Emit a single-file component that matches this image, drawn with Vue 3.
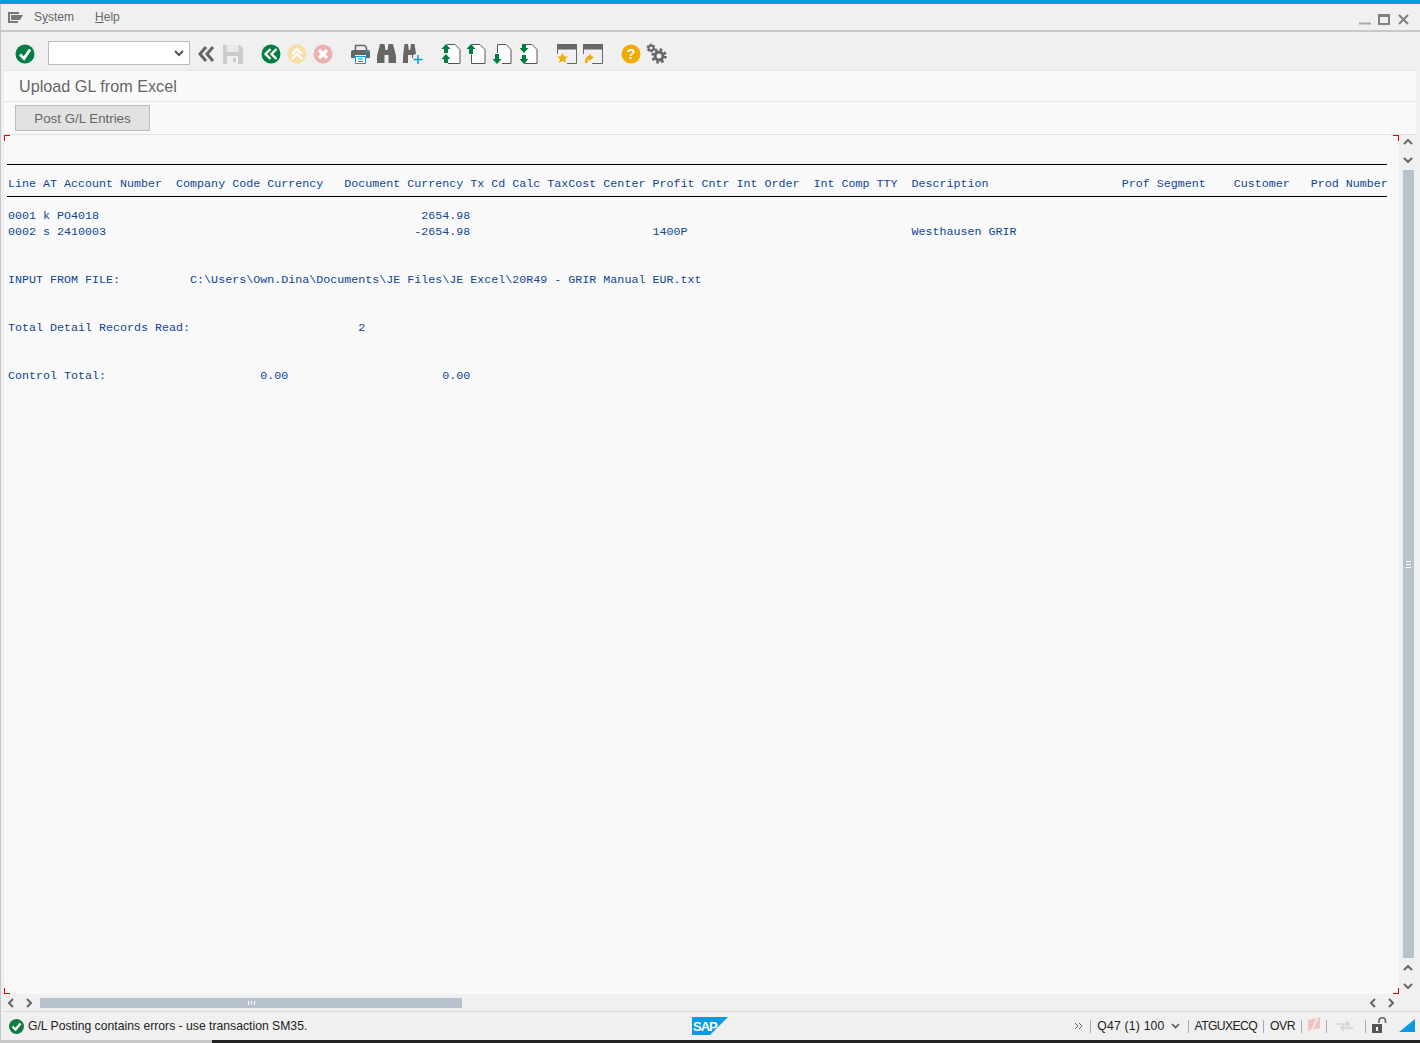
<template>
  <div class="page">
    <div class="blue-bar"></div>
    <div class="window">
      <div class="menubar">
        <svg class="menu-icon" width="15" height="11" viewBox="0 0 15 11">
          <path d="M0 0h11v2H2v7h8v2H0z" fill="#777" />
          <path d="M3 3h12l-3 5H3z" fill="#777" />
        </svg>
        <span class="menu-item">S<u>y</u>stem</span>
        <span class="menu-item"><u>H</u>elp</span>
        <div class="win-controls">
          <svg width="12" height="11" viewBox="0 0 12 11"><rect y="8.500" width="12" height="2" fill="#aaa" /></svg>
          <svg class="win-max" width="12" height="11" viewBox="0 0 12 11"><path d="M1 1h10v9H1z" fill="none" stroke="#808080" stroke-width="2" /><rect width="12" height="3" fill="#808080" /></svg>
          <svg width="11" height="11" viewBox="0 0 11 11"><path d="M1 1l9 9M10 1l-9 9" stroke="#808080" stroke-width="2" /></svg>
        </div>
      </div>

      <div class="toolbar">
        <svg class="ic" viewBox="0 0 20 20">
          <circle cx="10" cy="10" r="9.500" fill="#007d40" />
          <path d="M5 10.500l4 4 6-9" fill="none" stroke="#fff" stroke-width="3" />
        </svg>
        <div class="combo">
          <svg width="10" height="7" viewBox="0 0 10 7"><path d="M1 1l4 4 4-4" fill="none" stroke="#555" stroke-width="2" /></svg>
        </div>
        <div class="tb-group first">
          <svg class="ic" viewBox="0 0 20 20">
            <path d="M9 3l-6 7 6 7M16 3l-6 7 6 7" fill="none" stroke="#666" stroke-width="3" />
          </svg>
          <svg class="ic" viewBox="0 0 20 20">
            <path d="M0 1h17l3 3v16H0z" fill="#ccc" />
            <rect x="3.500" y="1" width="12" height="7" fill="#e9e9e9" />
            <rect x="4" y="12" width="11" height="8" fill="#f0f0f0" />
            <rect x="10" y="14" width="3" height="4" fill="#ccc" />
          </svg>
        </div>
        <div class="tb-group">
          <svg class="ic" viewBox="0 0 20 20">
            <circle cx="10" cy="10" r="9.500" fill="#007d40" />
            <path d="M9.500 5l-5 5 5 5M15.500 5l-5 5 5 5" fill="none" stroke="#fff" stroke-width="2.400" />
          </svg>
          <svg class="ic" viewBox="0 0 20 20">
            <circle cx="10" cy="10" r="9.500" fill="#f8dfa3" />
            <path d="M5 10l5-5 5 5M5 15l5-5 5 5" fill="none" stroke="#fff" stroke-width="2.400" />
          </svg>
          <svg class="ic" viewBox="0 0 20 20">
            <circle cx="10" cy="10" r="9.500" fill="#eeb0ae" />
            <path d="M6 6l8 8M14 6l-8 8" fill="none" stroke="#fff" stroke-width="3.200" />
          </svg>
        </div>
        <div class="tb-group">
          <svg class="ic" viewBox="0 0 20 20">
            <path d="M4.500 7V1.500h9l2 2V7" fill="none" stroke="#666" stroke-width="1.500" />
            <path d="M2 6h15a2 2 0 0 1 2 2v6h-4v-3H4v3H0V8a2 2 0 0 1 2-2z" fill="#666" />
            <rect x="15" y="6.500" width="3.500" height="1.500" fill="#0a9ae0" />
            <path d="M4.500 12.500h10v7h-10z" fill="#fff" stroke="#0a9ae0" />
            <path d="M7 15h5M7 17.500h5" stroke="#0a9ae0" />
          </svg>
          <svg class="ic" viewBox="0 0 20 20">
            <path d="M3 0h4.500l1 6h2l1-6H16l3 12v7h-7.500v-8h-4v8H0v-7z" fill="#666" />
          </svg>
          <svg class="ic" viewBox="0 0 20 20">
            <path d="M1.500 0H5l.8 6h1.400l.8-6h3.500l1.500 10-3 1v3H9v-3H5v8H0v-7z" fill="#666" />
            <path d="M15 11v9M10.500 15.500h9" stroke="#0a9ae0" stroke-width="1.500" />
          </svg>
        </div>
        <div class="tb-group">
          <svg class="ic" viewBox="0 0 20 20">
            <path class="sheet" d="M6 .5h8l5 5v14H7" />
            <path class="arrow" d="M5 0l4.500 5H7v4H3V5H.5zM5 10l4.500 5H7v4H3v-4H.5z" />
          </svg>
          <svg class="ic" viewBox="0 0 20 20">
            <path class="sheet" d="M4.500 5V.5H13l5 5v14H4.500v-9" />
            <path class="arrow" d="M4 0l4.500 5H6v5H2V5H-.5z" />
          </svg>
          <svg class="ic" viewBox="0 0 20 20">
            <path class="sheet" d="M4.500 9V.5H13l5 5v14H9" />
            <path class="arrow" d="M4 20l4.500-5H6v-5H2v5H-.5z" />
          </svg>
          <svg class="ic" viewBox="0 0 20 20">
            <path class="sheet" d="M5.500 .5H13l5 5v14H5.500" />
            <path class="arrow" d="M5 9l4.500-5H7V0H3v4H.5zM5 20l4.500-5H7v-4H3v4H.5z" />
          </svg>
        </div>
        <div class="tb-group">
          <svg class="ic" viewBox="0 0 20 20">
            <rect width="20" height="5.500" fill="#666" />
            <path d="M.5 5v5M19.500 5v14.500H10" fill="none" stroke="#666" />
            <path d="M5.500 9l1.700 3.600H11l-3 2.500 1.200 3.900-3.700-2.300L1.800 19 3 15.100 0 12.600h3.800z" fill="#f0ab00" />
          </svg>
          <svg class="ic" viewBox="0 0 20 20">
            <rect width="20" height="5.500" fill="#666" />
            <path d="M.5 5v5M19.500 5v14.500H9" fill="none" stroke="#666" />
            <path d="M2 19c0-5 2-7 4-7V9.500l4.500 4L6 17v-2c-.8 0-1.500 1-1.500 4z" fill="#f0ab00" />
          </svg>
        </div>
        <div class="tb-group">
          <svg class="ic" viewBox="0 0 20 20">
            <circle cx="10" cy="10" r="9.500" fill="#f0ab00" />
            <text x="10" y="15" text-anchor="middle" class="help-mark">?</text>
          </svg>
          <svg class="ic" viewBox="0 0 20 20">
            <circle cx="4" cy="4" r="2.500" fill="none" stroke="#666" stroke-width="2" />
            <circle cx="4" cy="4" r="3.700" fill="none" stroke="#666" stroke-width="1.500" stroke-dasharray="2 1.900" />
            <circle cx="12" cy="12" r="4" fill="none" stroke="#666" stroke-width="3" />
            <circle cx="12" cy="12" r="6.500" fill="none" stroke="#666" stroke-width="2.500" stroke-dasharray="2.600 2.500" />
          </svg>
        </div>
      </div>

      <div class="title-row">Upload GL from Excel</div>
      <div class="app-row">
        <button class="post-btn">Post G/L Entries</button>
      </div>

      <div class="content">
        <div class="report">
          <i class="mark tl"></i>
          <i class="mark tr"></i>
          <i class="mark bl"></i>
          <i class="mark br"></i>
          <div class="rule"></div>
          <div class="report-head">{{ headerLine }}</div>
          <div class="rule"></div>
          <div class="report-body">
            <div v-for="(row, i) in rows" :key="i" class="report-line">{{ row }}</div>
          </div>
        </div>
        <div class="vscroll">
          <svg class="chev" viewBox="0 0 10 6"><path d="M1 5l4-4 4 4" /></svg>
          <svg class="chev" viewBox="0 0 10 6"><path d="M1 1l4 4 4-4" /></svg>
          <div class="vthumb"><span class="vgrip"></span></div>
          <svg class="chev" viewBox="0 0 10 6"><path d="M1 5l4-4 4 4" /></svg>
          <svg class="chev last" viewBox="0 0 10 6"><path d="M1 1l4 4 4-4" /></svg>
        </div>
      </div>

      <div class="hscroll">
        <svg class="chev-h" viewBox="0 0 6 10"><path d="M5 1L1 5l4 4" /></svg>
        <svg class="chev-h" viewBox="0 0 6 10"><path d="M1 1l4 4-4 4" /></svg>
        <div class="hthumb"><span class="hgrip"></span></div>
        <svg class="chev-h end" viewBox="0 0 6 10"><path d="M5 1L1 5l4 4" /></svg>
        <svg class="chev-h" viewBox="0 0 6 10"><path d="M1 1l4 4-4 4" /></svg>
      </div>

      <div class="statusbar">
        <div class="status-msg">
          <svg width="15" height="15" viewBox="0 0 15 15">
            <circle cx="7.500" cy="7.500" r="7.500" fill="#107e3e" />
            <path d="M3.500 7.500l3 3 5-6" fill="none" stroke="#fff" stroke-width="2.200" />
          </svg>
          <span>G/L Posting contains errors - use transaction SM35.</span>
        </div>
        <svg class="sap-logo" width="36" height="18" viewBox="0 0 36 18">
          <path d="M0 0h36L18 18H0z" fill="#0a9ae0" />
          <text x="1" y="13.500" class="sap-text">SAP</text>
        </svg>
        <div class="status-info">
          <svg class="more" width="9" height="8" viewBox="0 0 9 8"><path d="M1 1l3 3-3 3M5 1l3 3-3 3" fill="none" stroke="#666" /></svg>
          <i class="sep"></i>
          <span class="sys">Q47 (1) 100</span>
          <svg class="drop" width="9" height="6" viewBox="0 0 9 6"><path d="M1 1l3.500 3.500L8 1" fill="none" stroke="#555" stroke-width="1.600" /></svg>
          <i class="sep"></i>
          <span class="host">ATGUXECQ</span>
          <i class="sep"></i>
          <span class="mode">OVR</span>
          <i class="sep"></i>
          <svg class="flag" width="12" height="14" viewBox="0 0 12 14"><path d="M0 3l12-3v11L0 14z" fill="#f0c4c4" /><path d="M4 13L10 0" stroke="#f8e4e4" stroke-width="2" /></svg>
          <i class="sep"></i>
          <svg class="swap" width="16" height="12" viewBox="0 0 16 12"><path d="M0 4h12M9 1l3 3-3 3M16 8H4M7 5L4 8l3 3" fill="none" stroke="#d4d4d4" stroke-width="1.500" /></svg>
          <i class="sep"></i>
          <svg class="lock" width="15" height="16" viewBox="0 0 15 16">
            <path d="M7 6V4a3 3 0 0 1 6.500 0v2" fill="none" stroke="#666" stroke-width="1.600" />
            <rect y="7" width="10" height="9" fill="#555" />
            <rect x="4" y="10" width="2" height="4" fill="#fff" />
          </svg>
          <svg class="corner" width="16" height="13" viewBox="0 0 16 13"><path d="M16 0v13H0z" fill="#0a9ae0" /></svg>
        </div>
      </div>
    </div>
    <div class="bottom-strip"><div class="strip-left"></div></div>
  </div>
</template>

<script setup>
// Listen stehen spaltengenau im Raster: [Spalte, Text]
function line(parts) {
  let out = ''
  for (const [col, text] of parts) {
    out = out.padEnd(col, ' ') + text
  }
  return out
}

const headerLine = line([
  [0, 'Line AT Account Number'],
  [24, 'Company Code Currency'],
  [48, 'Document Currency'],
  [66, 'Tx'],
  [69, 'Cd'],
  [72, 'Calc'],
  [77, 'TaxCost'],
  [85, 'Center'],
  [92, 'Profit'],
  [99, 'Cntr'],
  [104, 'Int'],
  [108, 'Order'],
  [115, 'Int Comp TTY'],
  [129, 'Description'],
  [159, 'Prof Segment'],
  [175, 'Customer'],
  [186, 'Prod Number']
])

const rows = [
  line([[0, '0001 k PO4018'], [59, '2654.98']]),
  line([[0, '0002 s 2410003'], [58, '-2654.98'], [92, '1400P'], [129, 'Westhausen GRIR']]),
  '',
  '',
  line([[0, 'INPUT FROM FILE:'], [26, 'C:\\Users\\Own.Dina\\Documents\\JE Files\\JE Excel\\20R49 - GRIR Manual EUR.txt']]),
  '',
  '',
  line([[0, 'Total Detail Records Read:'], [50, '2']]),
  '',
  '',
  line([[0, 'Control Total:'], [36, '0.00'], [62, '0.00']])
]
</script>

<style>
html,
body {
  margin: 0;
  background: #f0f0f0;
}
</style>

<style scoped>
.page {
  width: 1420px;
  height: 1043px;
  display: flex;
  flex-direction: column;
  overflow: hidden;
  font-family: "Liberation Sans", Arial, sans-serif;
}
.blue-bar {
  height: 4px;
  background: #009de0;
  flex: none;
}
.window {
  flex: 1;
  min-height: 0;
  display: flex;
  flex-direction: column;
  background: #f0f0f0;
  border-left: 1px solid #c8c8c8;
}
.menubar {
  height: 26px;
  flex: none;
  display: flex;
  align-items: center;
  border-bottom: 2px solid #c9c9c9;
  color: #666;
  font-size: 12px;
}
.menu-icon {
  margin-left: 7px;
  margin-right: 11px;
}
.menu-item {
  margin-right: 21px;
}
.win-controls {
  margin-left: auto;
  margin-right: 11px;
  display: flex;
  gap: 7px;
  padding-top: 5px;
}
.win-max {
  margin-right: 1px;
}
.toolbar {
  height: 38px;
  box-sizing: border-box;
  padding: 6px 0 0 14px;
  display: flex;
  align-items: center;
  flex: none;
}
.ic {
  width: 20px;
  height: 20px;
  display: block;
  overflow: visible;
}
.combo {
  width: 142px;
  height: 24px;
  box-sizing: border-box;
  margin: -2px 0 0 13px;
  background: #fff;
  border: 1px solid #bdbdbd;
  display: flex;
  align-items: center;
  justify-content: flex-end;
  padding-right: 5px;
}
.tb-group {
  display: flex;
  gap: 6px;
  margin-left: 18px;
}
.tb-group.first {
  margin-left: 7px;
}
.sheet {
  fill: #fff;
  stroke: #555;
}
.arrow {
  fill: #007d40;
}
.help-mark {
  font: bold 14px "Liberation Sans", Arial, sans-serif;
  fill: #fff;
}
.title-row {
  margin: 0 4px 0 3px;
  height: 30px;
  line-height: 30px;
  flex: none;
  padding-left: 15px;
  background: #fafafa;
  border-top: 1px solid #e6e6e6;
  border-bottom: 1px solid #e6e6e6;
  color: #666;
  font-size: 16.200px;
}
.app-row {
  margin: 0 4px 0 3px;
  height: 33px;
  box-sizing: border-box;
  flex: none;
  padding: 3px 0 0 11px;
  background: #fafafa;
  border-bottom: 1px solid #e0e0e0;
}
.post-btn {
  display: block;
  width: 135px;
  height: 26px;
  padding: 0;
  background: #e2e2e2;
  border: 1px solid #bdbdbd;
  color: #666;
  font: 13.300px "Liberation Sans", Arial, sans-serif;
}
.content {
  flex: 1;
  min-height: 0;
  display: flex;
  margin: 0 3px;
}
.report {
  position: relative;
  flex: 1;
  min-width: 0;
  padding: 29px 0 0 3px;
  background: #f9f9f9;
  overflow: hidden;
  font: 11.680px "Liberation Mono", "Courier New", monospace;
  color: #0f4696;
  white-space: pre;
}
.rule {
  width: 1380px;
  height: 1px;
  background: #000;
}
.report-head {
  height: 16px;
  line-height: 16px;
  padding: 11px 0 4px 1px;
}
.report-body {
  padding: 11px 0 0 1px;
}
.report-line {
  height: 16px;
  line-height: 16px;
}
.mark {
  position: absolute;
  width: 5px;
  height: 5px;
  border: 0 solid #e00000;
}
.mark.tl {
  left: 0;
  top: 0;
  border-width: 1px 0 0 1px;
}
.mark.tr {
  right: 0;
  top: 0;
  border-width: 1px 1px 0 0;
}
.mark.bl {
  left: 0;
  bottom: 0;
  border-width: 0 0 1px 1px;
}
.mark.br {
  right: 0;
  bottom: 0;
  border-width: 0 1px 1px 0;
}
.vscroll {
  width: 18px;
  flex: none;
  display: flex;
  flex-direction: column;
  align-items: center;
  padding: 4px 0 5px;
  box-sizing: border-box;
}
.chev {
  width: 10px;
  height: 6px;
  flex: none;
  margin-bottom: 12px;
}
.chev.last {
  margin-bottom: 0;
}
.chev path,
.chev-h path {
  fill: none;
  stroke: #666;
  stroke-width: 2;
}
.vthumb {
  width: 11px;
  flex: 1;
  min-height: 0;
  background: #b8c2cc;
  margin: -5px 0 7px;
  display: flex;
  align-items: center;
  justify-content: center;
}
.vgrip {
  width: 5px;
  height: 7px;
  background: repeating-linear-gradient(#fff 0 1px, transparent 1px 3px);
}
.hscroll {
  height: 17px;
  flex: none;
  margin-left: 3px;
  padding-right: 18px;
  display: flex;
  align-items: center;
  border-bottom: 1px solid #d8d8d8;
}
.chev-h {
  width: 6px;
  height: 10px;
  flex: none;
  margin-left: 4px;
  margin-right: 8px;
}
.chev-h + .chev-h {
  margin-left: 4px;
}
.hthumb {
  width: 422px;
  height: 10px;
  background: #b8c2cc;
  display: flex;
  align-items: center;
  justify-content: center;
}
.hgrip {
  width: 7px;
  height: 4px;
  background: repeating-linear-gradient(90deg, #fff 0 1px, transparent 1px 3px);
}
.chev-h.end {
  margin-left: auto;
}
.statusbar {
  height: 28px;
  flex: none;
  display: grid;
  grid-template-columns: 1fr auto 1fr;
  align-items: center;
  font-size: 12.200px;
  color: #222;
}
.status-msg {
  display: flex;
  align-items: center;
  gap: 4px;
  padding-left: 8px;
}
.status-info {
  display: flex;
  align-items: center;
  justify-content: flex-end;
  padding-right: 5px;
  gap: 6px;
  white-space: nowrap;
}
.sep {
  width: 1px;
  height: 13px;
  background: #aaa;
}
.sys {
  letter-spacing: 0.200px;
}
.host {
  letter-spacing: -0.625px;
}
.mode {
  letter-spacing: -0.500px;
}
.more {
  margin-right: 1px;
}
.drop {
  margin-right: 2px;
}
.flag {
  margin-top: -5px;
}
.swap {
  margin: 0 6px 0 4px;
}
.lock {
  margin-top: -2px;
}
.corner {
  margin-left: 6px;
  align-self: flex-end;
  margin-bottom: 2px;
}
.sap-logo {
  margin-left: -2px;
}
.sap-text {
  font: bold 13px "Liberation Sans", Arial, sans-serif;
  letter-spacing: -1px;
  fill: #fff;
}
.bottom-strip {
  height: 3px;
  flex: none;
  background: #222;
}
.strip-left {
  width: 212px;
  height: 3px;
  background: #c8c8c8;
}
</style>
